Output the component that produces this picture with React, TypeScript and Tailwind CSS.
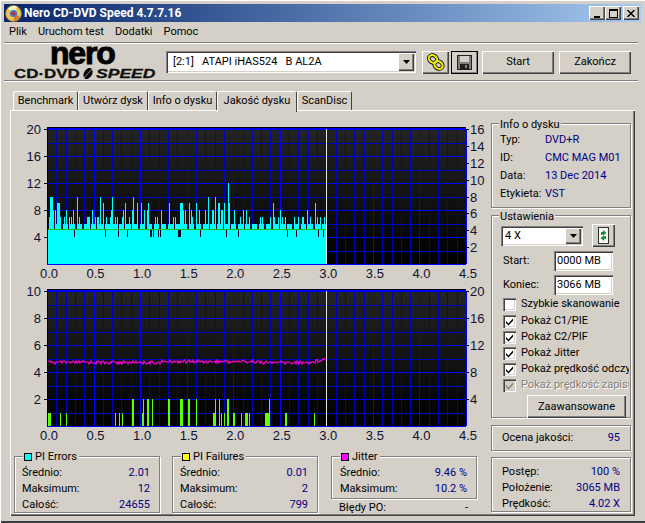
const raised =
  'bg-[#d4d0c8] shadow-[inset_1px_1px_0_#fff,inset_-1px_-1px_0_#404040,inset_-2px_-2px_0_#808080]';
const sunken =
  'shadow-[inset_1px_1px_0_#808080,inset_2px_2px_0_#404040,inset_-1px_-1px_0_#fff,inset_-2px_-2px_0_#d4d0c8]';
const groupBox =
  'relative border border-[#808080] shadow-[1px_1px_0_#fff,inset_1px_1px_0_#fff]';

const X0 = 36;
const PLOT_W = 419;
const PLOT_H = 135;
const XPX = PLOT_W / 4.5;

const piePeaks: Record<number, number> = {
  49: 7, 50: 10, 51: 10, 52: 10, 53: 8, 55: 8, 57: 9, 58: 9, 59: 9, 60: 7, 64: 7, 66: 8, 69: 7, 71: 7, 73: 8,
  77: 10, 79: 7, 87: 7, 88: 7, 89: 7, 92: 8, 95: 7, 97: 7, 98: 7, 100: 10, 103: 9, 106: 7, 110: 7, 111: 8,
  112: 10, 115: 7, 117: 7, 122: 7, 123: 8, 125: 9, 129: 7, 132: 8, 133: 10, 137: 9, 141: 9, 144: 8, 147: 8,
  148: 9, 155: 7, 157: 7, 161: 8, 169: 9, 173: 7, 175: 7, 180: 9, 181: 9, 182: 9, 183: 8, 185: 8, 189: 9,
  191: 8, 192: 7, 196: 9, 199: 8, 205: 8, 208: 10, 212: 8, 213: 8, 215: 10, 218: 9, 219: 9, 221: 8, 222: 8,
  224: 9, 228: 12, 229: 9, 234: 8, 240: 7, 243: 8, 246: 8, 249: 7, 260: 7, 262: 7, 270: 7, 273: 9, 274: 7,
  278: 7, 280: 8, 282: 7, 285: 7, 294: 7, 298: 7, 302: 7, 303: 7, 307: 8, 310: 7, 315: 9, 317: 7, 320: 7, 324: 7,
};
const pieNotches = [74, 105, 118, 127, 150, 151, 153, 158, 160, 178, 179, 180, 200, 226, 238, 287, 296, 318, 323];

// [x in page px, width, value]
const pifBars = [
  [48, 3, 1], [60, 1, 1], [66, 1, 1], [115, 1, 1], [119, 1, 1], [122, 1, 1], [132, 2, 2], [142, 2, 1], [143, 1, 2],
  [147, 2, 2], [152, 1, 2], [168, 2, 2], [180, 3, 2], [188, 2, 2], [196, 1, 2], [213, 3, 1], [215, 1, 2], [219, 1, 2],
  [221, 1, 1], [224, 1, 1], [227, 2, 2], [233, 2, 1], [241, 1, 1], [245, 3, 1], [249, 1, 1], [265, 4, 1], [269, 1, 2],
  [285, 2, 1], [314, 1, 1],
];

function Chart({
  height,
  top,
  maxLeft,
  left,
  right,
  children,
}: {
  height: number;
  top: number;
  maxLeft: number;
  left: number[];
  right: { label: number; y: number }[];
  children: React.ReactNode;
}) {
  const gid = `bg${top}`;
  const bottom = top + PLOT_H;
  const yOf = (v: number) => bottom - (v / maxLeft) * PLOT_H;
  const hLines = Array.from({ length: 11 }, (_, i) => Math.round(top + (i * PLOT_H) / 10));
  const vLines = Array.from({ length: 46 }, (_, i) => i);
  return (
    <svg width={480} height={height} className="block fill-[#101030] text-[13px] [font-family:'Liberation_Sans',sans-serif]">
      <defs>
        <linearGradient id={gid} x1="0" y1="0" x2="0" y2="1">
          <stop offset="0" stopColor="#242424" />
          <stop offset="1" stopColor="#000" />
        </linearGradient>
      </defs>
      <rect x={X0} y={top} width={PLOT_W} height={PLOT_H} fill={`url(#${gid})`} />
      <g shapeRendering="crispEdges">
        {hLines.map((y, i) => (
          <rect key={i} x={X0} y={y} width={PLOT_W} height={1} fill={i % 2 === 0 ? '#0000ff' : '#0000c8'} />
        ))}
        {vLines.map((i) => (
          <rect
            key={i}
            x={Math.round(X0 + (i * XPX) / 10)}
            y={top}
            width={1}
            height={PLOT_H}
            fill={i % 5 === 0 ? '#0000ff' : '#0000b8'}
          />
        ))}
        <rect x={X0} y={top - 1} width={PLOT_W} height={2} fill="#0000ff" />
        <rect x={X0} y={top - 2} width={PLOT_W} height={1} fill="#000" />
        <rect x={X0} y={top - 1} width={1} height={PLOT_H + 1} fill="#000" />
        {children}
        <rect x={315} y={top} width={1} height={PLOT_H} fill="#e4e4e4" />
        {left.map((v) => (
          <rect key={v} x={X0 - 3} y={Math.round(yOf(v))} width={3} height={1} fill="#000" />
        ))}
        {right.map((r) => (
          <rect key={r.label} x={X0 + PLOT_W} y={Math.round(r.y)} width={3} height={1} fill="#000" />
        ))}
      </g>
      {left.map((v) => (
        <text key={v} x={30} y={yOf(v) + 5} textAnchor="end">
          {v}
        </text>
      ))}
      {right.map((r) => (
        <text key={r.label} x={459} y={r.y + 5}>
          {r.label}
        </text>
      ))}
      {['0.0', '0.5', '1.0', '1.5', '2.0', '2.5', '3.0', '3.5', '4.0', '4.5'].map((l, i) => (
        <text key={l} x={X0 + 2 + i * (XPX / 2)} y={bottom + 14} textAnchor="middle">
          {l}
        </text>
      ))}
    </svg>
  );
}

function PieSeries() {
  const cols = [];
  for (let x = 48; x < 326; x++) {
    const v = piePeaks[x] ?? ((x * x + 3 * x) % 7 < 5 ? 6 : 5.1);
    const y = 150 - v * 6.75;
    cols.push(<rect key={x} x={x - 11} y={y} width={1} height={150 - y} fill="#00ffff" />);
  }
  return (
    <>
      {cols}
      {pieNotches.map((x) => (
        <rect key={x} x={x - 11} y={115} width={1} height={8} fill="#000020" />
      ))}
      <rect x={37} y={115} width={278} height={1} fill="#10c010" />
    </>
  );
}

function LowerSeries() {
  const pts: string[] = [];
  for (let x = 48; x < 326; x++) {
    const hump = x > 160 && x < 260 ? -1 : 0;
    const rise = x > 312 ? -((x - 312) * 0.3) : 0;
    const hash = Math.sin(x * 12.9898) * 43758.5453;
    const noise = Math.round((hash - Math.floor(hash)) * 3) - 1;
    pts.push(`${x - 11},${363 - 285 + hump + rise + noise}`);
  }
  return (
    <>
      {pifBars.map(([x, w, v]) => (
        <rect key={x} x={x - 11} y={142 - v * 13.5} width={w} height={v * 13.5} fill="#60ff00" />
      ))}
      <polyline points={pts.join(' ')} fill="none" stroke="#ff00e0" strokeWidth={1.1} shapeRendering="auto" />
    </>
  );
}

function StatRow({ label, value }: { label: string; value: string }) {
  return (
    <div className="flex h-[16px] items-center justify-between whitespace-nowrap">
      <span>{label}</span>
      <span className="text-[#000080]">{value}</span>
    </div>
  );
}

function Legend({ color, text }: { color: string; text: string }) {
  return (
    <div className="absolute -top-[7px] left-[8px] flex h-[14px] items-center gap-[3px] bg-[#d4d0c8] pr-[2px] pl-[1px]">
      <span className={`h-[8px] w-[8px] border border-black ${color}`} />
      <span>{text}</span>
    </div>
  );
}

function StatGroup({ color, title, rows }: { color: string; title: string; rows: [string, string][] }) {
  return (
    <div className={`${groupBox} h-[57px] w-[146px] pt-[8px] pr-[9px] pl-[7px]`}>
      <Legend color={color} text={title} />
      {rows.map(([l, v]) => (
        <StatRow key={l} label={l} value={v} />
      ))}
    </div>
  );
}

function Check({ label, checked, disabled }: { label: string; checked?: boolean; disabled?: boolean }) {
  return (
    <div className="flex h-[16px] items-center gap-[5px] pl-[11px]">
      <span className={`flex h-[13px] w-[13px] shrink-0 items-center justify-center ${sunken} ${disabled ? 'bg-[#d4d0c8]' : 'bg-white'}`}>
        {checked && (
          <svg width="9" height="9" viewBox="0 0 9 9">
            <path d="M1 4l2.5 2.5L8 1.5v2.2L3.5 8.5 1 6z" fill={disabled ? '#808080' : '#000'} />
          </svg>
        )}
      </span>
      <span className={`w-[108px] overflow-hidden whitespace-nowrap ${disabled ? 'text-[#808080] [text-shadow:1px_1px_0_#fff]' : ''}`}>{label}</span>
    </div>
  );
}

function DiscIcon() {
  return (
    <svg width="17" height="17" viewBox="0 0 17 17">
      <circle cx="8.5" cy="8.5" r="8" fill="#e8c850" stroke="#806820" strokeWidth="0.8" />
      <path d="M8.5 8.5L3 3.5A8 8 0 0 1 12 1.5z" fill="#f4f4d0" />
      <path d="M8.5 8.5L15.5 12A8 8 0 0 1 9 16z" fill="#d08030" />
      <circle cx="8.5" cy="8.5" r="3.6" fill="#5070c8" />
      <circle cx="8.5" cy="8.5" r="1.6" fill="#d02020" />
    </svg>
  );
}

function LinkIcon() {
  return (
    <svg width="18" height="18" viewBox="0 0 18 18">
      <ellipse cx="6" cy="6" rx="4.4" ry="3.6" transform="rotate(35 6 6)" fill="none" stroke="#000" strokeWidth="3.8" />
      <ellipse cx="11.5" cy="12" rx="4.4" ry="3.6" transform="rotate(35 11.5 12)" fill="none" stroke="#000" strokeWidth="3.8" />
      <ellipse cx="6" cy="6" rx="4.4" ry="3.6" transform="rotate(35 6 6)" fill="none" stroke="#f0f000" strokeWidth="2.2" />
      <ellipse cx="11.5" cy="12" rx="4.4" ry="3.6" transform="rotate(35 11.5 12)" fill="none" stroke="#f0f000" strokeWidth="2.2" />
    </svg>
  );
}

function FloppyIcon() {
  return (
    <svg width="15" height="15" viewBox="0 0 15 15" shapeRendering="crispEdges">
      <rect x="0.5" y="0.5" width="14" height="14" fill="#808080" stroke="#202020" />
      <rect x="3" y="1" width="9" height="6" fill="#d4d0c8" />
      <rect x="3" y="9" width="9" height="5" fill="#202020" />
      <rect x="8" y="10" width="2" height="3" fill="#808080" />
    </svg>
  );
}

function RefreshIcon() {
  return (
    <svg width="11" height="17" viewBox="0 0 11 17">
      <rect x="0.5" y="0.5" width="10" height="16" fill="#f4f4f4" stroke="#303030" />
      <path d="M3 8V5h2V3l3.5 3L5 8.5V7H4.5v1z" fill="#109030" />
      <path d="M8 9v3H6v2L2.5 11 6 8.5V10h.5V9z" fill="#109030" />
    </svg>
  );
}

function ArrowDown() {
  return (
    <svg width="7" height="4" viewBox="0 0 7 4">
      <path d="M0 0h7L3.5 4z" fill="#000" />
    </svg>
  );
}

function CaptionButton({ children }: { children: React.ReactNode }) {
  return <div className={`${raised} flex h-[14px] w-[16px] items-center justify-center`}>{children}</div>;
}

function Logo() {
  return (
    <div className="-mt-[4px] flex w-[152px] flex-col [font-family:'Liberation_Sans',sans-serif]">
      <div className="h-[26px] pl-[38px] text-[32px] leading-[23px] font-bold tracking-[-1.2px] text-black [-webkit-text-stroke:1px_#000]">
        nero
      </div>
      <div className="ml-[2px] flex h-[11px] w-[146px] items-center text-[13px] leading-[11px] font-bold whitespace-nowrap text-[#111] [-webkit-text-stroke:0.3px_#111]">
        <span className="inline-block w-[66px] origin-left scale-x-[1.3]">CD·DVD</span>
        <svg width="16" height="11" viewBox="0 0 16 11" className="shrink-0">
          <ellipse cx="8" cy="5.5" rx="4" ry="6" transform="rotate(30 8 5.5)" fill="#000" />
          <path d="M4 10L12 1" stroke="#d4d0c8" strokeWidth="0.8" />
        </svg>
        <span className="inline-block w-[62px] origin-left scale-x-[1.35] italic">SPEED</span>
      </div>
    </div>
  );
}

function Tab({ label, width }: { label: string; width: string }) {
  return (
    <div className={`${width} flex h-[19px] items-center justify-center rounded-t-[2px] bg-[#d4d0c8] shadow-[inset_1px_1px_0_#fff,inset_-1px_0_0_#404040]`}>
      {label}
    </div>
  );
}

const etched = 'h-[2px] border-t border-b border-t-[#808080] border-b-white';

export default function App() {
  return (
    <div className="relative h-[523px] w-[645px] overflow-hidden bg-[#d4d0c8] p-[4px] text-[11px] leading-[16px] text-black [font-family:Roboto,sans-serif] shadow-[inset_1px_1px_0_#fff,inset_0_-2px_0_#404040]">
      <div className="flex h-[18px] items-center justify-between bg-gradient-to-r from-[#0a246a] to-[#a6caf0] pr-[2px] pl-[1px]">
        <div className="flex items-center gap-[2px] text-[12px] font-bold text-white">
          <DiscIcon />
          <span>Nero CD-DVD Speed 4.7.7.16</span>
        </div>
        <div className="flex items-center">
          <CaptionButton>
            <span className="mt-[7px] h-[2px] w-[6px] bg-black" />
          </CaptionButton>
          <CaptionButton>
            <span className="h-[9px] w-[9px] border border-t-2 border-black" />
          </CaptionButton>
          <div className="ml-[2px]">
            <CaptionButton>
              <svg width="8" height="7" viewBox="0 0 8 7">
                <path d="M0.5 0L7.5 7M7.5 0L0.5 7" stroke="#000" strokeWidth="1.5" />
              </svg>
            </CaptionButton>
          </div>
        </div>
      </div>

      <div className="flex h-[20px] items-center gap-[11px] pl-[5px]">
        <span>Plik</span>
        <span>Uruchom test</span>
        <span>Dodatki</span>
        <span>Pomoc</span>
      </div>
      <div className={`${etched} mr-[3px]`} />

      <div className="flex h-[36px] items-center pr-[4px] pl-[8px]">
        <Logo />
        <div className={`${sunken} ml-[2px] flex h-[22px] w-[250px] items-center justify-between bg-white pr-[2px] pl-[7px] whitespace-pre`}>
          <span>[2:1]   ATAPI iHAS524   B AL2A</span>
          <div className={`${raised} flex h-[18px] w-[16px] items-center justify-center`}>
            <ArrowDown />
          </div>
        </div>
        <button className={`${raised} ml-[6px] flex h-[23px] w-[27px] items-center justify-center`}>
          <LinkIcon />
        </button>
        <button className={`${raised} ml-[2px] flex h-[23px] w-[27px] items-center justify-center outline -outline-offset-1 outline-black`}>
          <FloppyIcon />
        </button>
        <button className={`${raised} ml-[4px] h-[23px] w-[72px]`}>Start</button>
        <button className={`${raised} ml-[5px] h-[23px] w-[72px]`}>Zakończ</button>
      </div>
      <div className={`${etched} mr-[3px]`} />

      <div className="flex h-[28px] items-end pl-[9px]">
        <Tab label="Benchmark" width="w-[65px]" />
        <Tab label="Utwórz dysk" width="w-[70px]" />
        <Tab label="Info o dysku" width="w-[69px]" />
        <div className="relative z-10 -mb-[2px] flex h-[21px] w-[80px] items-center justify-center rounded-t-[2px] bg-[#d4d0c8] pb-[2px] shadow-[inset_1px_1px_0_#fff,inset_-1px_0_0_#404040]">
          Jakość dysku
        </div>
        <Tab label="ScanDisc" width="w-[55px]" />
      </div>

      <div className="ml-[6px] flex h-[406px] w-[625px] shadow-[inset_1px_1px_0_#fff,inset_-1px_-1px_0_#404040,inset_-2px_-2px_0_#808080]">
        <div className="ml-[1px] flex w-[480px] flex-col pt-[4px]">
          <Chart
            height={170}
            top={15}
            maxLeft={20}
            left={[20, 16, 12, 8, 4]}
            right={[16, 14, 12, 10, 8, 6, 4, 2].map((label, i) => ({ label, y: 15 + i * 16.88 }))}
          >
            <PieSeries />
          </Chart>
          <Chart
            height={160}
            top={7}
            maxLeft={10}
            left={[10, 8, 6, 4, 2]}
            right={[20, 16, 12, 8, 4].map((label, i) => ({ label, y: 7 + i * 27 }))}
          >
            <LowerSeries />
          </Chart>
          <div className="mt-[12px] ml-[3px] flex gap-[12px]">
            <StatGroup
              color="bg-[#00ffff]"
              title="PI Errors"
              rows={[
                ['Średnio:', '2.01'],
                ['Maksimum:', '12'],
                ['Całość:', '24655'],
              ]}
            />
            <StatGroup
              color="bg-[#ffff00]"
              title="PI Failures"
              rows={[
                ['Średnio:', '0.01'],
                ['Maksimum:', '2'],
                ['Całość:', '799'],
              ]}
            />
            <div className="ml-[1px] flex w-[146px] flex-col">
              <div className={`${groupBox} h-[43px] pt-[8px] pr-[9px] pl-[8px]`}>
                <Legend color="bg-[#ff00ff]" text="Jitter" />
                <StatRow label="Średnio:" value="9.46 %" />
                <StatRow label="Maksimum:" value="10.2 %" />
              </div>
              <div className="mt-[1px] pr-[9px] pl-[8px]">
                <StatRow label="Błędy PO:" value="-" />
              </div>
            </div>
          </div>
        </div>

        <div className="flex w-[140px] flex-col pt-[13px]">
          <div className={`${groupBox} h-[85px] pt-[7px] pl-[8px]`}>
            <div className="absolute -top-[7px] left-[7px] bg-[#d4d0c8] px-[1px]">Info o dysku</div>
            {[
              ['Typ:', 'DVD+R'],
              ['ID:', 'CMC MAG M01'],
              ['Data:', '13 Dec 2014'],
              ['Etykieta:', 'VST'],
            ].map(([l, v]) => (
              <div key={l} className="flex h-[18px] items-center whitespace-nowrap">
                <span className="w-[45px]">{l}</span>
                <span className="text-[#000080]">{v}</span>
              </div>
            ))}
          </div>

          <div className={`${groupBox} mt-[7px] h-[203px]`}>
            <div className="absolute -top-[7px] left-[7px] bg-[#d4d0c8] px-[1px]">Ustawienia</div>
            <div className="mt-[8px] flex items-center pl-[9px]">
              <div className={`${sunken} flex h-[20px] w-[82px] items-center justify-between bg-white pr-[2px] pl-[4px]`}>
                <span>4 X</span>
                <div className={`${raised} flex h-[16px] w-[16px] items-center justify-center`}>
                  <ArrowDown />
                </div>
              </div>
              <button className={`${raised} ml-[9px] flex h-[23px] w-[23px] items-center justify-center`}>
                <RefreshIcon />
              </button>
            </div>
            <div className="mt-[4px] flex h-[20px] items-center pl-[11px]">
              <span className="w-[51px]">Start:</span>
              <span className={`${sunken} h-[20px] w-[59px] bg-white pt-[2px] pl-[3px]`}>0000 MB</span>
            </div>
            <div className="mt-[4px] flex h-[20px] items-center pl-[11px]">
              <span className="w-[51px]">Koniec:</span>
              <span className={`${sunken} h-[20px] w-[59px] bg-white pt-[2px] pl-[3px]`}>3066 MB</span>
            </div>
            <div className="mt-[1px] flex flex-col">
              <Check label="Szybkie skanowanie" />
              <div className="h-[1px]" />
              <Check label="Pokaż C1/PIE" checked />
              <Check label="Pokaż C2/PIF" checked />
              <Check label="Pokaż Jitter" checked />
              <Check label="Pokaż prędkość odczytu" checked />
              <Check label="Pokaż prędkość zapisu" checked disabled />
            </div>
            <div className="mt-[2px] flex justify-end pr-[4px]">
              <button className={`${raised} h-[23px] w-[99px]`}>Zaawansowane</button>
            </div>
          </div>

          <div className={`${groupBox} mt-[7px] flex h-[26px] items-center justify-between px-[10px]`}>
            <span>Ocena jakości:</span>
            <span className="text-[#000080]">95</span>
          </div>

          <div className={`${groupBox} mt-[6px] h-[55px] px-[10px] pt-[6px]`}>
            <StatRow label="Postęp:" value="100 %" />
            <StatRow label="Położenie:" value="3065 MB" />
            <StatRow label="Prędkość:" value="4.02 X" />
          </div>
        </div>
      </div>
    </div>
  );
}
